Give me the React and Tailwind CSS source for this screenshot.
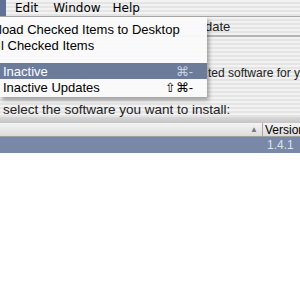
import React from "react";

const stripes =
  "bg-[repeating-linear-gradient(180deg,#f2f2f2_0px,#f2f2f2_2px,#e4e4e4_2px,#e4e4e4_4px)]";

function MenuItem({ label, shortcut, active, offset }) {
  return (
    <div
      className={`flex items-center justify-between h-[16px] pr-[14px] whitespace-nowrap ${
        active ? "bg-[#6c7b9a] text-white" : "text-black"
      }`}
    >
      <span className={offset}>{label}</span>
      {shortcut && (
        <span className={active ? "text-[#c9d2e4]" : "text-black"}>{shortcut}</span>
      )}
    </div>
  );
}

export default function App() {
  return (
    <div
      className="relative w-[300px] h-[300px] overflow-hidden bg-white text-[13px] leading-none whitespace-nowrap"
      style={{ fontFamily: '"Liberation Sans", "DejaVu Sans", sans-serif' }}
    >
      {/* menu bar */}
      <div className={`flex items-center h-[17px] border-b border-[#a8a8a8] ${stripes}`}>
        <div className="w-[6px] h-full bg-[#5f7196]" />
        <div
          className="flex pl-[9px] text-black text-[12px]"
          style={{ fontFamily: '"DejaVu Sans", sans-serif' }}
        >
          <span>Edit</span>
          <span className="ml-[15px]">Window</span>
          <span className="ml-[12px]">Help</span>
        </div>
      </div>

      {/* window behind */}
      <div className={`h-[100px] ${stripes}`}>
        <div className="h-[20px] border-b-2 border-[#b4b4b4] flex items-center pl-[205px] text-[#222]">
          date
        </div>
        <div className="pl-[208px] pt-[30px] text-[12px] text-[#222]">ted software for y</div>
        <div className="pl-[3px] pt-[24px] text-[13.5px] text-[#222]">
          select the software you want to install:
        </div>
      </div>

      {/* table */}
      <div className="h-[6px] bg-gradient-to-b from-[#d8d8d8] to-[#c4c4c4]" />
      <div className="flex h-[14px] bg-gradient-to-b from-[#f4f4f4] to-[#dcdcdc] border-b border-[#a0a0a0] text-[12px]">
        <div className="flex-1 flex items-center justify-end pr-[4px] text-[8px] text-[#777]">▲</div>
        <div className="w-[38px] border-l border-[#a8a8a8] flex items-center pl-[2px] text-black">
          Version
        </div>
      </div>
      <div className="flex h-[16px] bg-[#7888a6] text-[12px]">
        <div className="flex-1" />
        <div className="w-[38px] flex items-center pl-[5px] text-[#dde3ee]">1.4.1</div>
      </div>

      {/* dropdown menu */}
      <div className="absolute left-0 top-[17px] w-[207px] pt-[4px] pb-[2px] bg-[#fafafa]/95 shadow-[2px_3px_4px_rgba(0,0,0,0.35)] text-[13px]">
        <MenuItem label="load Checked Items to Desktop" offset="-ml-[1px]" />
        <MenuItem label="l Checked Items" offset="ml-[1px]" />
        <div className="h-[10px]" />
        <MenuItem label="Inactive" shortcut="⌘-" active offset="ml-[3px]" />
        <MenuItem label="Inactive Updates" shortcut="⇧⌘-" offset="ml-[3px]" />
      </div>
    </div>
  );
}
